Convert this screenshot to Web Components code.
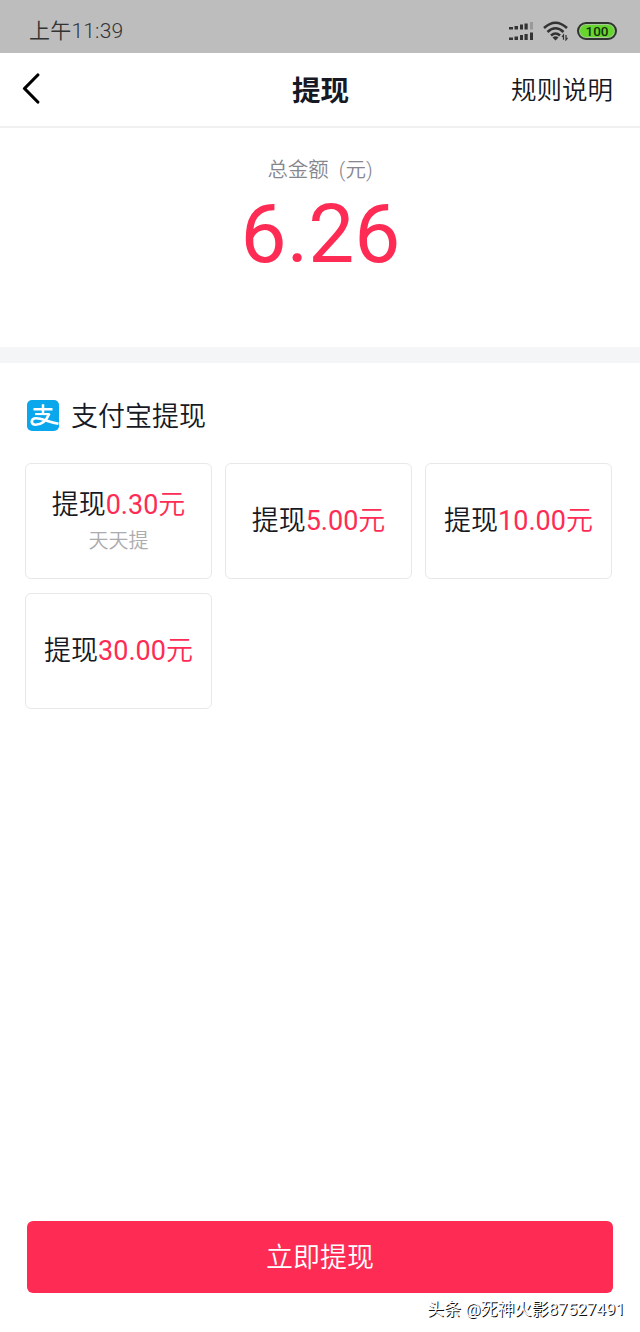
<!DOCTYPE html>
<html lang="zh-CN">
<head>
<meta charset="utf-8">
<title>提现</title>
<style>
  body {
    margin: 0;
    background: #fff;
    color: #161823;
    font-family: Roboto, "Noto Sans CJK SC", sans-serif;
  }
</style>
</head>
<body>
<withdraw-page>
  <status-bar slot="top">上午11:39</status-bar>
  <nav-header slot="top">提现<span slot="action">规则说明</span></nav-header>
  <total-amount slot="top" value="6.26">总金额&nbsp; (元)</total-amount>
  <pay-method>支付宝提现</pay-method>
  <amount-grid>
    <amount-option amount="0.30">天天提</amount-option>
    <amount-option amount="5.00"></amount-option>
    <amount-option amount="10.00"></amount-option>
    <amount-option amount="30.00"></amount-option>
  </amount-grid>
  <submit-button slot="bottom">立即提现</submit-button>
  <water-mark slot="bottom">头条 @死神火影87527491</water-mark>
</withdraw-page>

<script>
class BaseElement extends HTMLElement {
  constructor() {
    super();
    this.attachShadow({ mode: "open" });
    this.shadowRoot.innerHTML = this.render();
  }
}

class WithdrawPage extends BaseElement {
  render() {
    return `
      <style>
        :host {
          display: flex;
          flex-direction: column;
          height: 1332px;
          overflow: hidden;
        }
        main {
          flex: 1;
          padding: 33px 28px 0 25px;
        }
      </style>
      <slot name="top"></slot>
      <main><slot></slot></main>
      <slot name="bottom"></slot>
    `;
  }
}

class StatusBar extends BaseElement {
  render() {
    return `
      <style>
        :host {
          display: flex;
          align-items: center;
          box-sizing: border-box;
          height: 53px;
          padding: 8px 23px 0 29px;
          background: #bdbdbd;
          color: #333;
          font-size: 21px;
          line-height: 30px;
          font-weight: 350;
        }
        .time {
          flex: 1;
          letter-spacing: 0.2px;
        }
        svg {
          display: block;
        }
        .wifi {
          margin: 0 8px 0 9px;
        }
        .battery {
          box-sizing: border-box;
          width: 40px;
          height: 18px;
          border: 2px solid #303430;
          border-radius: 9px;
          background: #66d62e;
          box-shadow: inset 0 0 0 1px #a9c99a;
          color: #14300b;
          font-size: 13.500px;
          line-height: 14px;
          font-weight: 500;
          text-align: center;
        }
      </style>
      <span class="time"><slot></slot></span>
      <svg width="25" height="20" viewBox="0 0 25 20" fill="#333">
        <path d="M0 6h4v2.500H0zM5.500 5H9v3.500H5.500zM11 3.500h3v5h-3zM15.500 2.500h3.200v6h-3.200z"/>
        <path d="M21 1h3v7.500h-3z" fill="#999"/>
        <path d="M0 16.500h4V19H0zM5.500 15.500H9V19H5.500zM11 14h3v5h-3zM15.500 13h3.200v6h-3.200zM21 11.500h3V19h-3z"/>
      </svg>
      <svg class="wifi" width="26" height="20" viewBox="0 0 26 20" fill="none" stroke="#333" stroke-width="2.600">
        <path d="M1 7Q12.500-3.500 24 7M4.500 11Q12.500 3.500 20.500 11M8 14.500Q12.500 10.500 17 14.500"/>
        <path d="M9.500 16.500Q12.500 14 15.500 16.500L12.500 19.500z" fill="#333" stroke="none"/>
        <path d="M20.500 18.800V14l-1.500 2M23 14v4.800l1.500-2" stroke-width="1.200"/>
      </svg>
      <span class="battery">100</span>
    `;
  }
}

class NavHeader extends BaseElement {
  render() {
    return `
      <style>
        :host {
          display: grid;
          grid-template-columns: 1fr auto 1fr;
          align-items: center;
          box-sizing: border-box;
          height: 75px;
          padding: 0 27px 3px 22px;
          border-bottom: 2px solid #f0f0f1;
          font-size: 28.500px;
          font-weight: 700;
        }
        svg {
          display: block;
        }
        .title {
          padding-left: 6px;
        }
        .action {
          justify-self: end;
          padding-bottom: 2px;
          font-size: 25.500px;
          font-weight: 350;
        }
      </style>
      <svg width="20" height="32" viewBox="0 0 20 32" fill="none" stroke="#000" stroke-width="3.200" stroke-linecap="round" stroke-linejoin="round">
        <path d="M15.800 3L2.500 16.500L15.800 30"/>
      </svg>
      <span class="title"><slot></slot></span>
      <span class="action"><slot name="action"></slot></span>
    `;
  }
}

class TotalAmount extends BaseElement {
  render() {
    return `
      <style>
        :host {
          display: flex;
          flex-direction: column;
          align-items: center;
          box-sizing: border-box;
          height: 235px;
          padding-top: 27px;
          border-bottom: 16px solid #f4f5f7;
        }
        .label {
          color: #86878e;
          font-size: 20.500px;
          line-height: 30px;
          font-weight: 350;
        }
        .value {
          padding-left: 1px;
          color: #fe2c55;
          font-size: 82px;
          line-height: 99px;
        }
      </style>
      <span class="label"><slot></slot></span>
      <span class="value">${this.getAttribute("value")}</span>
    `;
  }
}

class PayMethod extends BaseElement {
  render() {
    return `
      <style>
        :host {
          display: flex;
          align-items: center;
          gap: 12px;
          height: 40px;
          margin-bottom: 27px;
          font-size: 27px;
          line-height: 40px;
          font-weight: 350;
        }
        svg {
          display: block;
          margin: -2px 0 0 2px;
        }
        span {
          padding-top: 2px;
        }
      </style>
      <svg width="32" height="31" viewBox="0 0 32 32" preserveAspectRatio="none">
        <rect width="32" height="32" rx="5" fill="#0ba7ec"/>
        <g fill="none" stroke="#fff">
          <path d="M6.500 9.500H25.500M16 4.500V14.500" stroke-width="2.500"/>
          <path d="M8 14.500H22.500" stroke-width="2.200"/>
          <path d="M22.300 14C20 20 15.500 25.500 8.500 25.500C3.500 25.500 3.500 19 9 18.800C15 18.600 21 22.800 31.500 24.500" stroke-width="2.700"/>
        </g>
      </svg>
      <span><slot></slot></span>
    `;
  }
}

class AmountGrid extends BaseElement {
  render() {
    return `
      <style>
        :host {
          display: grid;
          grid-template-columns: repeat(3, 187px);
          grid-auto-rows: 116px;
          gap: 14px 13px;
        }
      </style>
      <slot></slot>
    `;
  }
}

class AmountOption extends BaseElement {
  render() {
    return `
      <style>
        :host {
          display: flex;
          flex-direction: column;
          align-items: center;
          justify-content: center;
          box-sizing: border-box;
          border: 1px solid #e8e8e9;
          border-radius: 6px;
          font-size: 27px;
          line-height: 40px;
          font-weight: 350;
        }
        .amount {
          color: #fe2c55;
          font-weight: 400;
        }
        .unit {
          font-weight: 350;
        }
        .note {
          color: #acacb0;
          font-size: 20px;
          line-height: 32px;
        }
      </style>
      <div>提现<span class="amount">${this.getAttribute("amount")}<span class="unit">元</span></span></div>
      <div class="note"><slot></slot></div>
    `;
  }
}

class SubmitButton extends BaseElement {
  render() {
    return `
      <style>
        :host {
          display: block;
          margin: 0 27px;
        }
        button {
          display: block;
          width: 100%;
          height: 72px;
          padding: 0 0 4px;
          border: 0;
          border-radius: 6px;
          background: #fe2c55;
          color: #fff;
          font: inherit;
          font-size: 27px;
          font-weight: 350;
        }
      </style>
      <button><slot></slot></button>
    `;
  }
}

class WaterMark extends BaseElement {
  render() {
    return `
      <style>
        :host {
          display: block;
          height: 39px;
          padding-right: 15px;
          color: #fff;
          font-family: Roboto, "Noto Sans CJK SC", sans-serif;
          font-size: 17px;
          line-height: 33px;
          font-weight: 400;
          text-align: right;
          text-shadow: 1px 1px 0 #111;
        }
      </style>
      <slot></slot>
    `;
  }
}

customElements.define("withdraw-page", WithdrawPage);
customElements.define("status-bar", StatusBar);
customElements.define("nav-header", NavHeader);
customElements.define("total-amount", TotalAmount);
customElements.define("pay-method", PayMethod);
customElements.define("amount-grid", AmountGrid);
customElements.define("amount-option", AmountOption);
customElements.define("submit-button", SubmitButton);
customElements.define("water-mark", WaterMark);
</script>
</body>
</html>
